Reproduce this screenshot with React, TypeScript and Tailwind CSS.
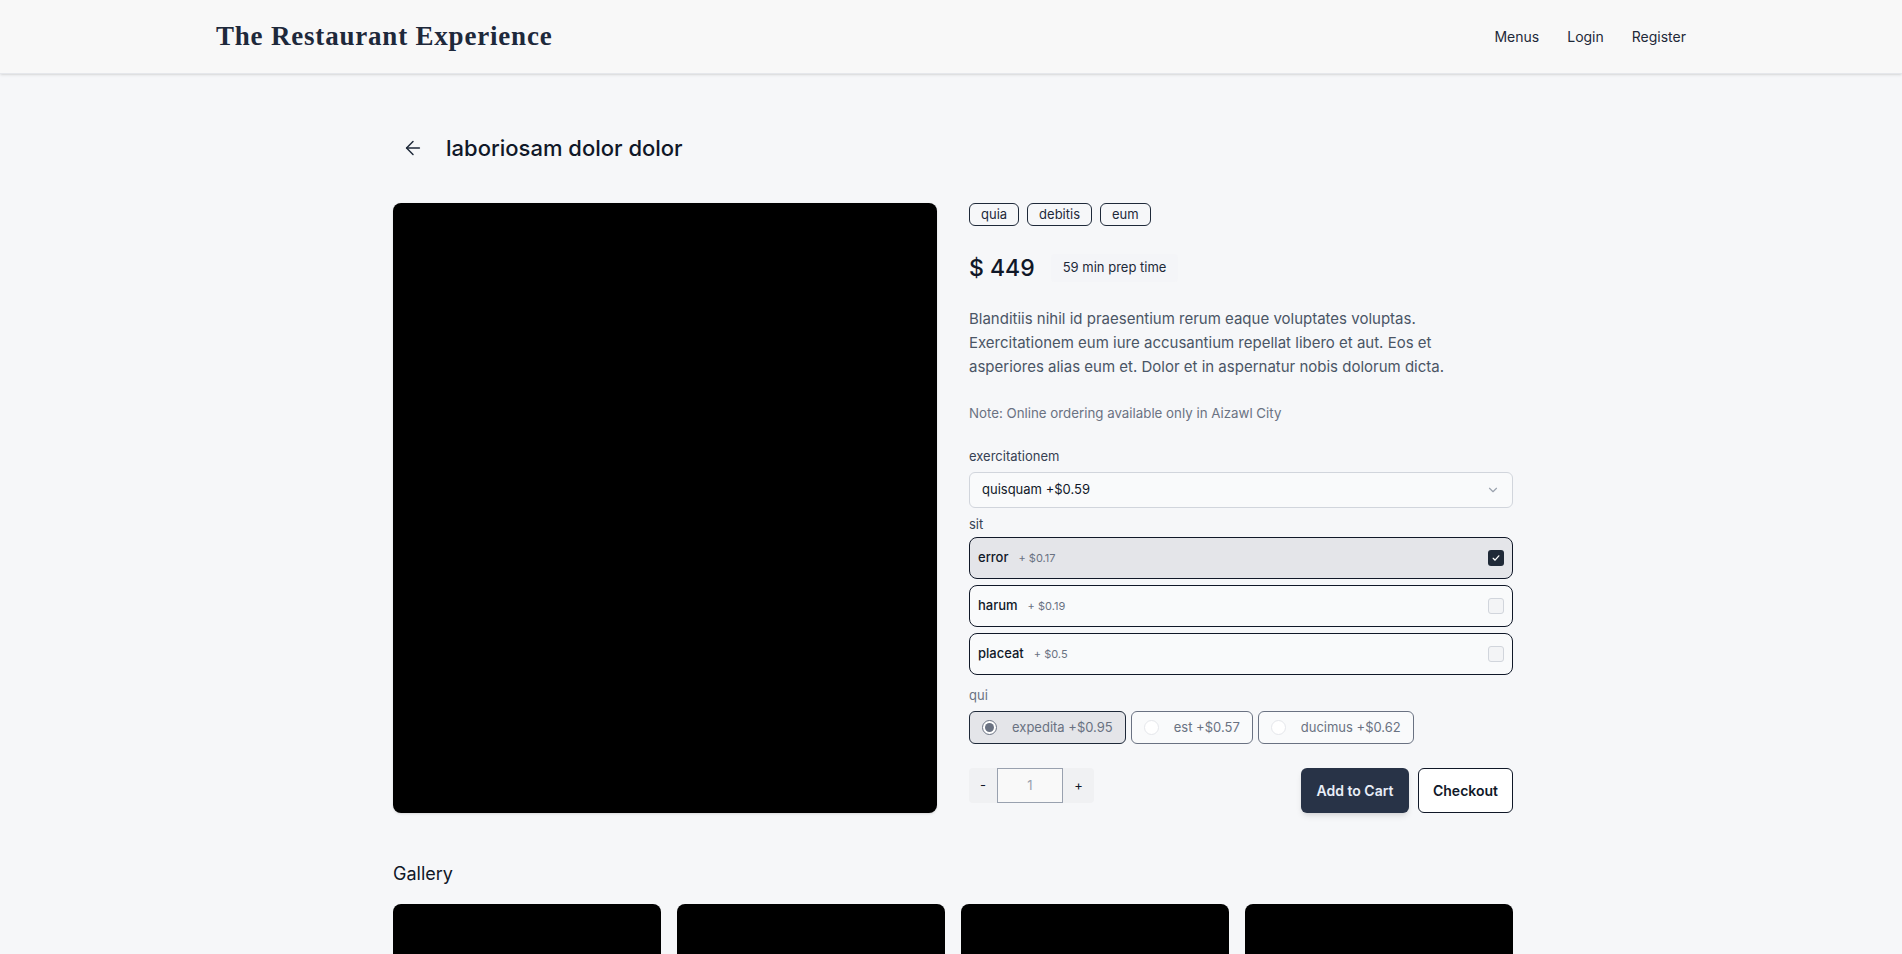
import React from "react";

const sans = "font-['Inter','Noto_Sans',sans-serif]";

function Tag({ label }: { label: string }) {
  return (
    <span className="inline-flex h-[23px] items-center rounded-md border border-gray-800 px-[11px] text-[13px] text-gray-800">
      {label}
    </span>
  );
}

function CheckRow({ name, price, checked }: { name: string; price: string; checked?: boolean }) {
  return (
    <div
      className={
        "flex h-[42px] items-center justify-between rounded-lg border border-gray-900 px-2 " +
        (checked ? "bg-[#e4e5e9]" : "bg-[#f9fafb]")
      }
    >
      <div className="flex items-center">
        <span className="text-[13px] font-medium text-gray-900">{name}</span>
        <span className="ml-2.5 text-[11px] text-gray-500">{price}</span>
      </div>
      {checked ? (
        <span className="flex h-4 w-4 items-center justify-center rounded-[3px] bg-[#1f2937]">
          <svg width="10" height="10" viewBox="0 0 16 16" fill="none">
            <path d="M3.5 8.5l3 3 6-7" stroke="white" strokeWidth="2" strokeLinecap="round" strokeLinejoin="round" />
          </svg>
        </span>
      ) : (
        <span className="h-4 w-4 rounded-[3px] border border-gray-300 bg-[#f3f4f6]" />
      )}
    </div>
  );
}

function RadioOpt({ label, selected }: { label: string; selected?: boolean }) {
  return (
    <div
      className={
        "flex h-[33px] items-center gap-[15px] rounded-md border px-[12px] " +
        (selected ? "border-gray-800 bg-[#e4e5e9]" : "border-gray-500 bg-[#f9fafb]")
      }
    >
      {selected ? (
        <span className="flex h-[15px] w-[15px] items-center justify-center rounded-full border border-gray-500 bg-white">
          <span className="h-[9px] w-[9px] rounded-full bg-gray-500" />
        </span>
      ) : (
        <span className="h-[15px] w-[15px] rounded-full border border-gray-200 bg-white" />
      )}
      <span className="text-[13px] text-gray-500">{label}</span>
    </div>
  );
}

export default function App() {
  return (
    <div className={"min-h-screen bg-[#f6f7f9] " + sans}>
      <header className="h-[74px] border-b border-gray-200 bg-[#f8f8f8] shadow-sm">
        <div className="mx-auto flex h-full w-[1470px] items-center justify-between">
          <div className="font-['Liberation_Serif',serif] text-[27px] font-bold tracking-[0.8px] text-[#1e293b]">
            The Restaurant Experience
          </div>
          <nav className="flex items-center gap-7 text-[14px] text-gray-800">
            <span>Menus</span>
            <span>Login</span>
            <span>Register</span>
          </nav>
        </div>
      </header>

      <main className="mx-auto w-[1124px] pb-10 pl-1 pt-[54px]">
        <div className="flex h-10 items-center">
          <button className="flex h-10 w-10 items-center justify-center text-gray-800">
            <svg width="22" height="22" viewBox="0 0 24 24" fill="none" stroke="currentColor" strokeWidth="1.6" strokeLinecap="round" strokeLinejoin="round">
              <path d="M19 12H5" />
              <path d="M12 19l-7-7 7-7" />
            </svg>
          </button>
          <h1 className="ml-[13px] text-[22px] font-medium text-gray-900">laboriosam dolor dolor</h1>
        </div>

        <div className="mt-[35px] grid grid-cols-2 gap-8">
          <div className="h-[610px] rounded-lg bg-black shadow" />

          <div className="flex flex-col">
            <div className="flex gap-2">
              <Tag label="quia" />
              <Tag label="debitis" />
              <Tag label="eum" />
            </div>

            <div className="mt-[26px] flex h-8 items-center">
              <span className="text-[23px] font-medium text-gray-900">$ 449</span>
              <span className="ml-4 rounded bg-[#f3f4f6]/60 px-3 py-1 text-[13px] text-gray-800">59 min prep time</span>
            </div>

            <p className="mt-[23px] pr-3 text-[15px] leading-6 text-gray-600">
              Blanditiis nihil id praesentium rerum eaque voluptates voluptas. Exercitationem eum iure accusantium repellat libero et aut. Eos et asperiores alias eum et. Dolor et in aspernatur nobis dolorum dicta.
            </p>

            <p className="mt-6 text-[13.3px] leading-5 text-gray-500">Note: Online ordering available only in Aizawl City</p>

            <label className="mt-[23px] text-[13px] leading-5 text-gray-700">exercitationem</label>
            <div className="mt-1.5 flex h-9 items-center justify-between rounded-md border border-gray-300 bg-[#f9fafb] px-3">
              <span className="text-[13px] text-gray-900">quisquam +$0.59</span>
              <svg width="14" height="14" viewBox="0 0 24 24" fill="none" stroke="#9ca3af" strokeWidth="2" strokeLinecap="round" strokeLinejoin="round">
                <path d="M6 9l6 6 6-6" />
              </svg>
            </div>

            <label className="mt-1.5 text-[13px] leading-5 text-gray-700">sit</label>
            <div className="mt-[3px] flex flex-col gap-1.5">
              <CheckRow name="error" price="+ $0.17" checked />
              <CheckRow name="harum" price="+ $0.19" />
              <CheckRow name="placeat" price="+ $0.5" />
            </div>

            <label className="mt-2.5 text-[13px] leading-5 text-gray-500">qui</label>
            <div className="mt-1.5 flex gap-[5px]">
              <RadioOpt label="expedita +$0.95" selected />
              <RadioOpt label="est +$0.57" />
              <RadioOpt label="ducimus +$0.62" />
            </div>

            <div className="mt-6 flex items-start justify-between">
              <div className="flex h-[35px] items-stretch">
                <button className="w-7 rounded-l bg-[#f0f1f3] text-[13px] text-gray-900">-</button>
                <div className="flex w-[66px] items-center justify-center border border-gray-400 bg-[#f9f9f9] text-[13px] text-gray-400">1</div>
                <button className="w-[31px] rounded-r bg-[#f0f1f3] text-[13px] text-gray-900">+</button>
              </div>
              <div className="flex gap-[9px]">
                <button className="h-[45px] w-[108px] rounded-md bg-[#283347] text-[14px] font-semibold text-[#e8eef8] shadow-md">
                  Add to Cart
                </button>
                <button className="h-[45px] w-[95px] rounded-md border border-gray-900 bg-white text-[14px] font-semibold text-gray-900">
                  Checkout
                </button>
              </div>
            </div>
          </div>
        </div>

        <h2 className="mt-[47px] text-[18px] leading-7 text-gray-900">Gallery</h2>
        <div className="mt-4 grid grid-cols-4 gap-4">
          <div className="h-[268px] rounded-lg bg-black" />
          <div className="h-[268px] rounded-lg bg-black" />
          <div className="h-[268px] rounded-lg bg-black" />
          <div className="h-[268px] rounded-lg bg-black" />
        </div>
      </main>
    </div>
  );
}
